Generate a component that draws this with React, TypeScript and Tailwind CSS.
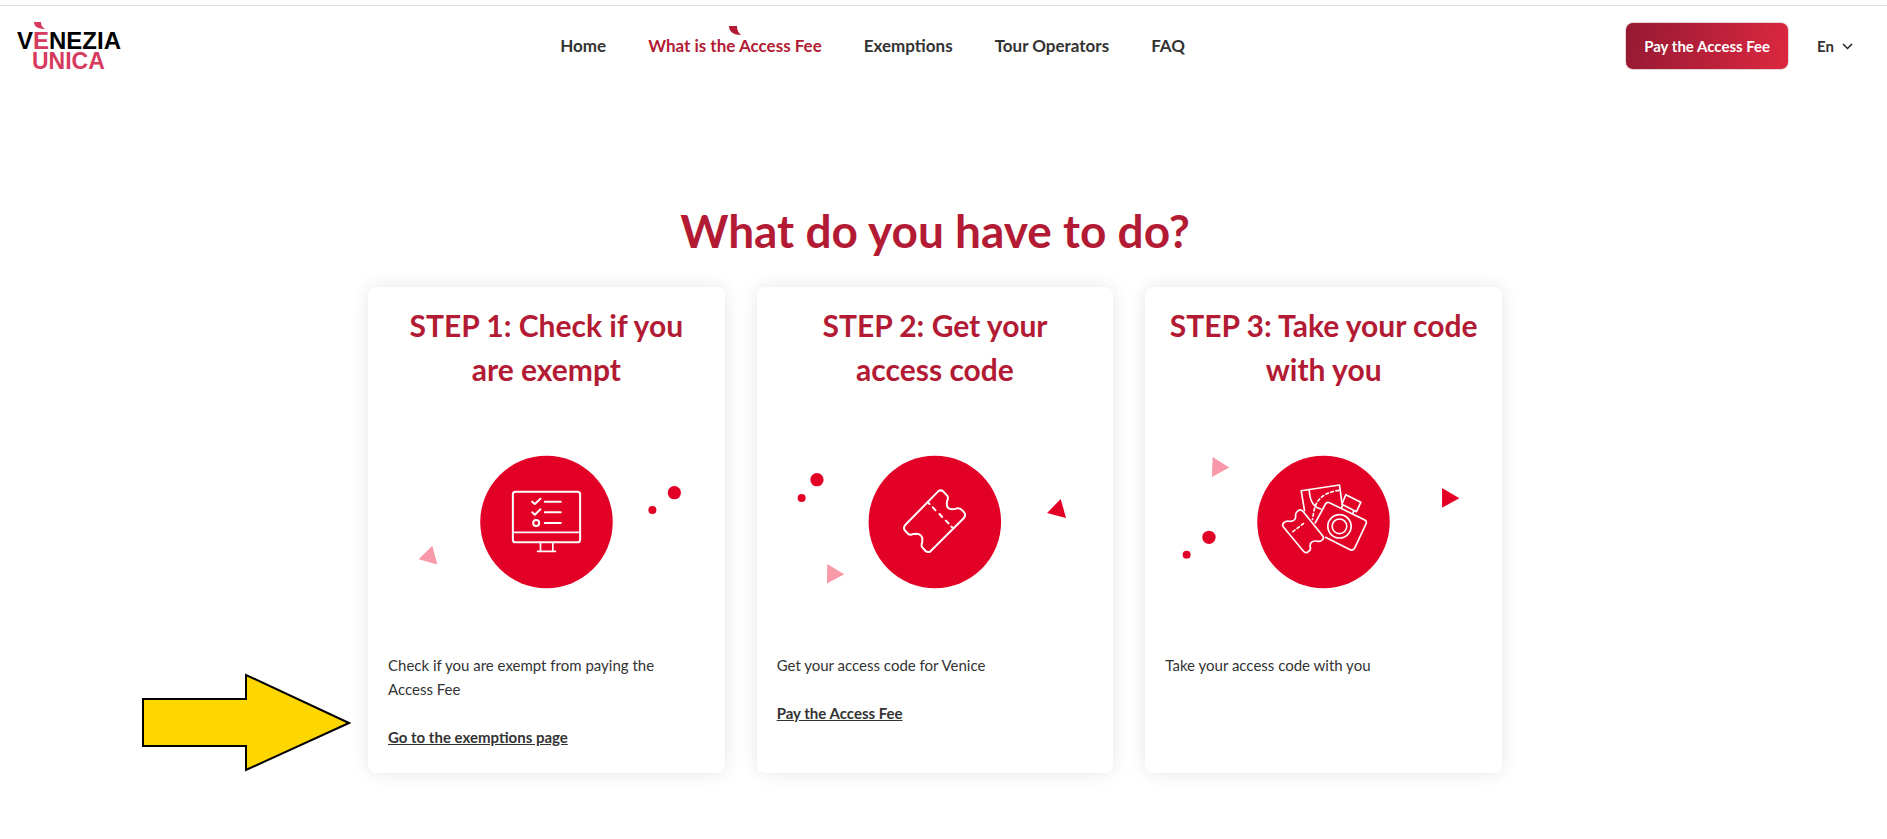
import { useState } from 'react';
import type { ReactNode } from 'react';

interface NavItem {
  label: string;
  href: string;
  active?: boolean;
}

interface Step {
  title: string;
  art: ReactNode;
  text: string;
  link?: { label: string; href: string };
  highlighted?: boolean;
}

const NAV: NavItem[] = [
  { label: 'Home', href: '#home' },
  { label: 'What is the Access Fee', href: '#access-fee', active: true },
  { label: 'Exemptions', href: '#exemptions' },
  { label: 'Tour Operators', href: '#tour-operators' },
  { label: 'FAQ', href: '#faq' },
];

function Logo() {
  return (
    <svg width="103" height="48" viewBox="0 0 103 48" overflow="visible" role="img" aria-label="Vènezia Unica">
      <path d="M17 0h7c0 3 1 5 4 7-6 0-11-2-11-7z" fill="#d63a5e" />
      <g fontFamily="'Liberation Sans', Arial, sans-serif" fontWeight="700">
        <text x="0" y="27" fontSize="24">V<tspan fill="#d63a5e">E</tspan>NEZIA</text>
        <text x="15" y="47" fontSize="23" fill="#d63a5e">UNICA</text>
      </g>
    </svg>
  );
}

function Header() {
  const [langOpen, setLangOpen] = useState(false);

  return (
    <header className="border-t border-[#dedede] pl-[17px] pr-[34px] py-4 flex items-center justify-between">
      <a href="#home" className="shrink-0"><Logo /></a>

      <nav className="flex items-center gap-[42px]">
        {NAV.map((item) => (
          <a
            key={item.label}
            href={item.href}
            className={`relative text-[17px] leading-6 font-bold ${item.active ? 'text-[#b31b34]' : 'text-[#333]'}`}
          >
            {item.active && (
              <svg className="absolute left-1/2 -top-2 -translate-x-1/2" width="14" height="9" viewBox="0 0 14 9">
                <path d="M1 0h8c0 4 1 6 4 9C6 9 1 6 1 0z" fill="#b31b34" />
              </svg>
            )}
            {item.label}
          </a>
        ))}
      </nav>

      <div className="flex items-center gap-7">
        <button className="h-12 px-[18px] rounded-lg border border-[#e5d5d9] bg-linear-100 from-[#961932] to-[#dc2840] text-white text-[15px] font-bold">
          Pay the Access Fee
        </button>
        <button
          onClick={() => setLangOpen(!langOpen)}
          aria-expanded={langOpen}
          className="flex items-center gap-2 text-[15px] font-bold text-[#333]"
        >
          En
          <svg width="11" height="7" viewBox="0 0 11 7" fill="none" stroke="#222" strokeWidth="1.5">
            <path d="M1 1l4.500 4.500L10 1" />
          </svg>
        </button>
      </div>
    </header>
  );
}

function ComputerArt() {
  return (
    <svg className="w-full h-[200px]" viewBox="84 0 951 600" aria-hidden="true">
      <circle cx="560" cy="306" r="199" fill="#e30026" />
      <path d="M217 377l15 57-56-16z" fill="#f799a8" />
      <circle cx="944" cy="218" r="20" fill="#e30026" />
      <circle cx="878" cy="270" r="12" fill="#e30026" />
      <g fill="none" stroke="#fff" strokeWidth="6" strokeLinecap="round" strokeLinejoin="round">
        <rect x="459" y="215" width="202" height="152" rx="8" />
        <path d="M459 337h202M542 368v24M579 368v24M533 394h54" strokeWidth="5" />
        <path d="M517 245l8 7 17-16M517 277l8 7 17-16M555 245h48M555 277h48M555 309h48" />
        <circle cx="529" cy="309" r="9" />
      </g>
    </svg>
  );
}

function TicketArt() {
  return (
    <svg className="w-full h-[200px]" viewBox="81 0 951 600" aria-hidden="true">
      <circle cx="555" cy="306" r="199" fill="#e30026" />
      <circle cx="201" cy="179" r="20" fill="#e30026" />
      <circle cx="155" cy="234" r="12" fill="#e30026" />
      <path d="M933 237l16 57-57-15z" fill="#e30026" />
      <path d="M232 432l51 31-52 28z" fill="#f799a8" />
      <g fill="none" stroke="#fff" strokeWidth="6" strokeLinecap="round" strokeLinejoin="round">
        <path d="M565 214Q573 208 580 214L592 227Q597 233 592 243Q587 266 605 268Q612 268 622 265Q632 263 643 277Q649 284 643 293L542 394Q534 399 527 393L518 383Q513 378 517 367Q521 342 499 341Q490 341 484 344Q479 345 474 341L464 330Q460 323 466 315z" />
        <path d="M534 246l5 6M549 262l8 9M569 282l8 9M588 302l8 8M605 320l6 5" />
      </g>
    </svg>
  );
}

function TravelArt() {
  return (
    <svg className="w-full h-[200px]" viewBox="105 0 951 600" aria-hidden="true">
      <circle cx="581" cy="306" r="199" fill="#e30026" />
      <path d="M248 111l50 31-52 29z" fill="#f799a8" />
      <path d="M937 204l52 31-52 28z" fill="#e30026" />
      <circle cx="237" cy="352" r="20" fill="#e30026" />
      <circle cx="170" cy="404" r="12" fill="#e30026" />
      <g fill="none" stroke="#fff" strokeWidth="5" strokeLinecap="round" strokeLinejoin="round">
        {/* Map */}
        <path d="M524 272L514 212L629 195L636 246M538 209C540 240 548 260 573 267" />
        <path d="M627 211C585 217 560 236 553 270L548 298" strokeDasharray="8 8" />
        {/* Camera */}
        <path d="M556 309L587 252Q591 245 599 248L705 300Q712 304 709 311L675 384Q670 393 661 389L587 352" />
        <path d="M648 224L693 247L680 275L636 253zM638 256L635 265M672 272L669 280" />
        <circle cx="629" cy="319" r="35" />
        <circle cx="629" cy="319" r="22" />
        {/* Ticket */}
        <path d="M505 272Q512 266 519 274L579 348Q584 356 576 361Q569 366 559 363Q539 362 541 381Q545 389 534 396Q527 401 521 394L460 320Q456 314 462 308Q469 302 479 304Q500 304 497 285Q497 277 505 272z" />
        <path d="M489 335l38-29" strokeDasharray="8 8" />
      </g>
    </svg>
  );
}

const STEPS: Step[] = [
  {
    title: 'STEP 1: Check if you are exempt',
    art: <ComputerArt />,
    text: 'Check if you are exempt from paying the Access Fee',
    link: { label: 'Go to the exemptions page', href: '#exemptions' },
    highlighted: true,
  },
  {
    title: 'STEP 2: Get your access code',
    art: <TicketArt />,
    text: 'Get your access code for Venice',
    link: { label: 'Pay the Access Fee', href: '#pay' },
  },
  {
    title: 'STEP 3: Take your code with you',
    art: <TravelArt />,
    text: 'Take your access code with you',
  },
];

function PointerArrow() {
  return (
    <svg className="absolute right-full bottom-0 mr-[17px]" width="210" height="100" viewBox="0 0 210 100" aria-hidden="true">
      <path d="M2 26h103V2l103 48-103 47V73H2z" fill="#ffd700" stroke="#000" strokeWidth="2" />
    </svg>
  );
}

function StepCard({ step }: { step: Step }) {
  return (
    <article className="relative rounded-lg bg-white px-5 pt-4 pb-6 shadow-[0_0_18px_rgba(0,0,0,0.1)]">
      <h2 className="text-center text-[30px] leading-11 font-bold text-[#b31b34]">{step.title}</h2>
      <div className="mt-[29px]">{step.art}</div>
      <p className="mt-[33px] pr-9 text-[15px] leading-6 text-[#333]">{step.text}</p>
      {step.link && (
        <a href={step.link.href} className="mt-6 inline-block text-[15px] leading-6 font-bold text-[#333] underline">
          {step.link.label}
        </a>
      )}
      {step.highlighted && <PointerArrow />}
    </article>
  );
}

export default function App() {
  return (
    <div className="bg-white pt-[5px] font-['Lato',sans-serif]">
      <Header />
      <main className="pr-[17px] pt-[113px] pb-16">
        <h1 className="text-center text-[46px] leading-16 font-bold text-[#b31b34]">What do you have to do?</h1>
        <div className="mx-auto mt-6 grid max-w-[1134px] grid-cols-3 gap-8">
          {STEPS.map((step) => (
            <StepCard key={step.title} step={step} />
          ))}
        </div>
      </main>
    </div>
  );
}
